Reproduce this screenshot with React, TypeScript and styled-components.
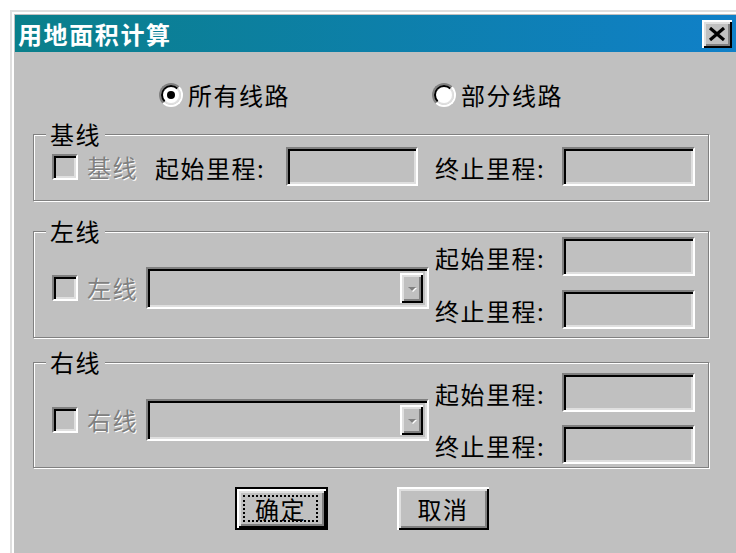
import React from "react";
import styled, { createGlobalStyle } from "styled-components";

const GlobalStyle = createGlobalStyle`
  html, body { margin: 0; padding: 0; background: #fff; overflow: hidden; }
  body { font-family: "Noto Sans CJK SC", "Noto Sans", sans-serif; }
  * { box-sizing: border-box; }
`;

const Page = styled.div`
  width: 736px;
  height: 553px;
  overflow: hidden;
  background: #fff;
  padding: 10px 0 0 10px;
`;

const Window = styled.div`
  width: 731px;
  height: 570px;
  background: #c0c0c0;
  border-top: 2px solid #dfdfdf;
  border-left: 2px solid #dfdfdf;
  border-right: 2px solid #000;
  border-bottom: 2px solid #000;
  box-shadow: inset 2px 2px 0 #fff, inset -2px -2px 0 #808080;
  padding: 3px;
  display: flex;
  flex-direction: column;
`;

const TitleBar = styled.div`
  flex: none;
  height: 37px;
  display: flex;
  align-items: center;
  justify-content: space-between;
  padding: 0 4px 0 3px;
  background: linear-gradient(to right, #0a7f8a, #1080c8);
`;

const Title = styled.span`
  color: #fff;
  font-weight: 700;
  font-size: 24px;
  letter-spacing: 1.6px;
  line-height: 1;
`;

const RaisedBox = styled.div`
  background: #c0c0c0;
  box-shadow: inset 2px 2px 0 #fff, inset -2px -2px 0 #000, inset 4px 4px 0 #dfdfdf,
    inset -4px -4px 0 #808080;
  display: flex;
  align-items: center;
  justify-content: center;
`;

const CloseButton = styled(RaisedBox)`
  width: 30px;
  height: 28px;
  margin-top: 1px;
`;

const Content = styled.div`
  display: flex;
  flex-direction: column;
  padding: 30px 0 0 18px;
  font-size: 24px;
  color: #000;
  line-height: 1;
`;

const RadioRow = styled.div`
  display: grid;
  grid-template-columns: 273px auto;
  padding-left: 126px;
  height: 26px;
  align-items: center;
`;

const RadioItem = styled.label`
  display: flex;
  align-items: center;
  gap: 5px;
  letter-spacing: 1.5px;
`;

const RadioOuter = styled.span`
  width: 24px;
  height: 24px;
  border-radius: 50%;
  border: 2px solid;
  border-color: #808080 #fff #fff #808080;
  display: flex;
`;

const RadioInner = styled.span`
  flex: 1;
  border-radius: 50%;
  border: 2px solid;
  border-color: #000 #dfdfdf #dfdfdf #000;
  background: #fff;
  display: flex;
  align-items: center;
  justify-content: center;
`;

const RadioDot = styled.span<{ $on: boolean }>`
  width: 8px;
  height: 8px;
  border-radius: 50%;
  background: ${(p) => (p.$on ? "#000" : "transparent")};
`;

const Group = styled.fieldset<{ $mt: number }>`
  margin: ${(p) => p.$mt}px 0 0 0;
  width: 676px;
  min-inline-size: 0;
  padding: 0;
  border: 1px solid #808080;
  box-shadow: inset 1px 1px 0 #fff, 1px 1px 0 #fff;
`;

const Legend = styled.legend`
  margin-left: 12px;
  padding: 0 4px;
  height: 12px;
  line-height: 12px;
  font-size: 24px;
  letter-spacing: 1.5px;
  background: #c0c0c0;
`;

const GroupBody = styled.div<{ $pt: number; $pb: number }>`
  display: flex;
  align-items: center;
  padding: ${(p) => p.$pt}px 0 ${(p) => p.$pb}px 18px;
`;

const LeftPart = styled.div<{ $shift: number }>`
  display: flex;
  align-items: center;
  margin-top: ${(p) => p.$shift}px;
`;

const RightPart = styled.div<{ $gap: number }>`
  display: flex;
  flex-direction: column;
  gap: ${(p) => p.$gap}px;
  margin-left: 6px;
`;

const FieldRow = styled.div`
  display: flex;
  align-items: center;
`;

const Sunken = styled.div`
  background: #c0c0c0;
  border: 2px solid;
  border-color: #808080 #fff #fff #808080;
  box-shadow: inset 2px 2px 0 #000, inset -2px -2px 0 #dfdfdf;
`;

const CheckBox = styled(Sunken)`
  width: 26px;
  height: 26px;
  margin-right: 9px;
  flex: none;
`;

const DimText = styled.span<{ $w: number }>`
  width: ${(p) => p.$w}px;
  flex: none;
  color: #808080;
  text-shadow: 1px 1px 0 #fff;
  letter-spacing: 1.5px;
`;

const FieldLabel = styled.span<{ $w: number; $ml?: number }>`
  width: ${(p) => p.$w}px;
  margin-left: ${(p) => p.$ml ?? 0}px;
  flex: none;
  letter-spacing: 1.5px;
  padding-top: 3px;
`;

const Edit = styled(Sunken)<{ $w: number }>`
  width: ${(p) => p.$w}px;
  height: 39px;
  flex: none;
`;

const Combo = styled(Sunken)`
  width: 283px;
  height: 42px;
  flex: none;
  display: flex;
  justify-content: flex-end;
  padding: 2px 4px 2px 0;
`;

const DropButton = styled(RaisedBox)`
  width: 23px;
  height: 30px;
  margin: 2px 0;
`;

const DropArrow = styled.span`
  width: 0;
  height: 0;
  border-left: 4px solid transparent;
  border-right: 4px solid transparent;
  border-top: 4px solid #808080;
  filter: drop-shadow(1px 1px 0 #fff);
  margin-top: 2px;
`;

const ButtonRow = styled.div`
  display: flex;
  gap: 69px;
  padding-left: 202px;
  margin-top: 19px;
`;

const PushButton = styled(RaisedBox)<{ $w: number; $default?: boolean }>`
  width: ${(p) => p.$w}px;
  height: 43px;
  border: ${(p) => (p.$default ? "2px solid #000" : "none")};
  font-size: 24px;
  letter-spacing: 1.5px;
`;

const FocusRing = styled.span`
  width: 75px;
  height: 27px;
  border: 2px dotted #000;
  display: flex;
  align-items: center;
  justify-content: center;
  margin-right: 2px;
`;

function Radio({ on, label }: { on: boolean; label: string }) {
  return (
    <RadioItem>
      <RadioOuter>
        <RadioInner>
          <RadioDot $on={on} />
        </RadioInner>
      </RadioOuter>
      {label}
    </RadioItem>
  );
}

function RangeFields({ gap }: { gap: number }) {
  return (
    <RightPart $gap={gap}>
      <FieldRow>
        <FieldLabel $w={127}>起始里程:</FieldLabel>
        <Edit $w={133} />
      </FieldRow>
      <FieldRow>
        <FieldLabel $w={127}>终止里程:</FieldLabel>
        <Edit $w={133} />
      </FieldRow>
    </RightPart>
  );
}

function SideLine({
  name,
  mt,
  pt,
  pb,
  shift,
  gap,
}: {
  name: string;
  mt: number;
  pt: number;
  pb: number;
  shift: number;
  gap: number;
}) {
  return (
    <Group $mt={mt}>
      <Legend>{name}</Legend>
      <GroupBody $pt={pt} $pb={pb}>
        <LeftPart $shift={shift}>
          <CheckBox />
          <DimText $w={59}>{name}</DimText>
          <Combo>
            <DropButton>
              <DropArrow />
            </DropButton>
          </Combo>
        </LeftPart>
        <RangeFields gap={gap} />
      </GroupBody>
    </Group>
  );
}

export default function App() {
  return (
    <Page>
      <GlobalStyle />
      <Window>
        <TitleBar>
          <Title>用地面积计算</Title>
          <CloseButton>
            <svg width="18" height="14" viewBox="0 0 18 14">
              <path d="M2 1 L16 13 M16 1 L2 13" stroke="#000" strokeWidth="3.2" fill="none" />
            </svg>
          </CloseButton>
        </TitleBar>
        <Content>
          <RadioRow>
            <Radio on label="所有线路" />
            <Radio on={false} label="部分线路" />
          </RadioRow>

          <Group $mt={20}>
            <Legend>基线</Legend>
            <GroupBody $pt={7} $pb={14}>
              <CheckBox />
              <DimText $w={68}>基线</DimText>
              <FieldLabel $w={131}>起始里程:</FieldLabel>
              <Edit $w={132} />
              <FieldLabel $w={127} $ml={17}>终止里程:</FieldLabel>
              <Edit $w={133} />
            </GroupBody>
          </Group>

          <SideLine name="左线" mt={24} pt={0} pb={8} shift={10} gap={14} />
          <SideLine name="右线" mt={18} pt={5} pb={3} shift={3} gap={13} />

          <ButtonRow>
            <PushButton $w={93} $default>
              <FocusRing>确定</FocusRing>
            </PushButton>
            <PushButton $w={92}>取消</PushButton>
          </ButtonRow>
        </Content>
      </Window>
    </Page>
  );
}
